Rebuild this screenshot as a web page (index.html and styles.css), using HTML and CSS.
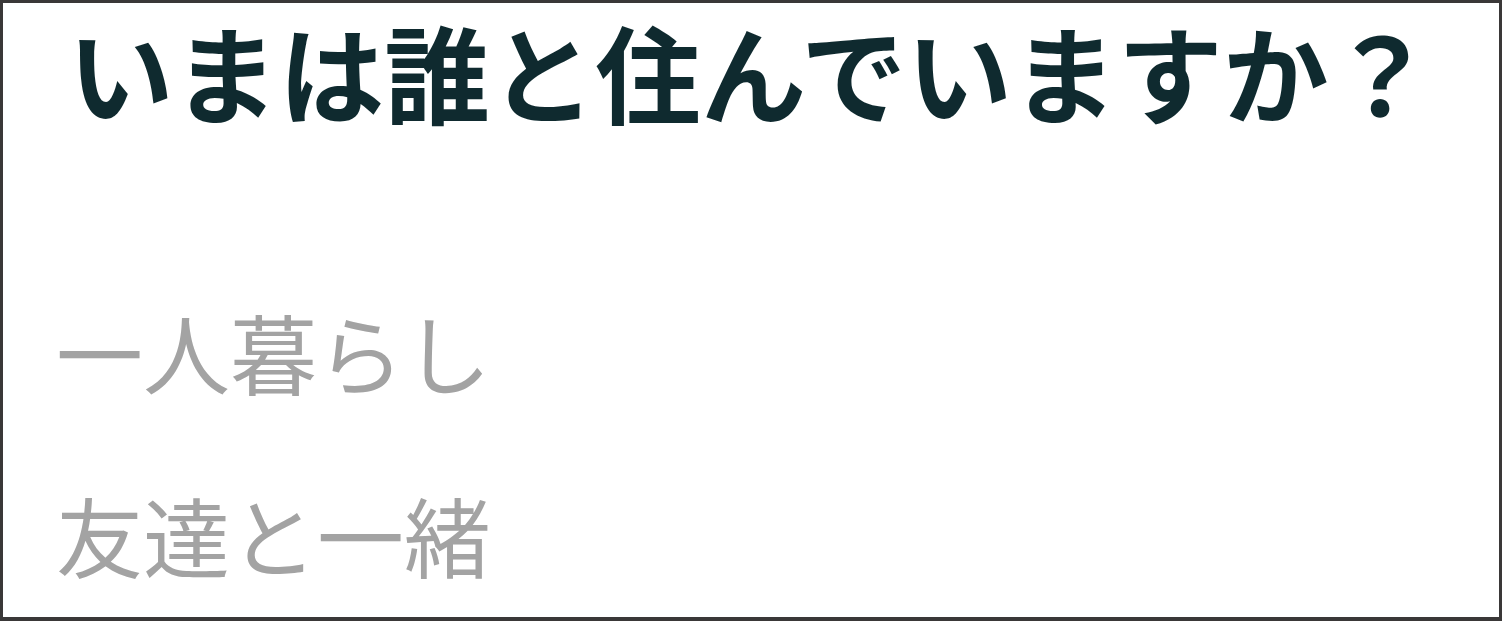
FILE: index.html
```html
<!DOCTYPE html>
<html lang="ja">
<head>
<meta charset="utf-8">
<link rel="stylesheet" href="styles.css">
</head>
<body>
<div class="frame">
  <h1 class="title">いまは誰と住んでいますか？</h1>
  <ul class="options">
    <li class="option">一人暮らし</li>
    <li class="option">友達と一緒</li>
  </ul>
</div>
</body>
</html>
```

FILE: styles.css
```css
html, body {
  margin: 0;
  padding: 0;
  background: #ffffff;
}
.frame {
  box-sizing: border-box;
  width: 1502px;
  height: 621px;
  border: 3px solid #3a3838;
  border-bottom-width: 4px;
  background: #ffffff;
  font-family: "Noto Sans CJK JP", "Noto Sans", sans-serif;
}
.title {
  margin: -10px 0 0;
  font-size: 105.5px;
  line-height: 154px;
  font-weight: 700;
  color: #0f2a2f;
  text-align: center;
}
.options {
  list-style: none;
  margin: 139px 0 0;
  padding: 0 0 0 53px;
  display: flex;
  flex-direction: column;
  gap: 53px;
}
.option {
  font-size: 87px;
  line-height: 130px;
  color: #a3a3a3;
}
```
